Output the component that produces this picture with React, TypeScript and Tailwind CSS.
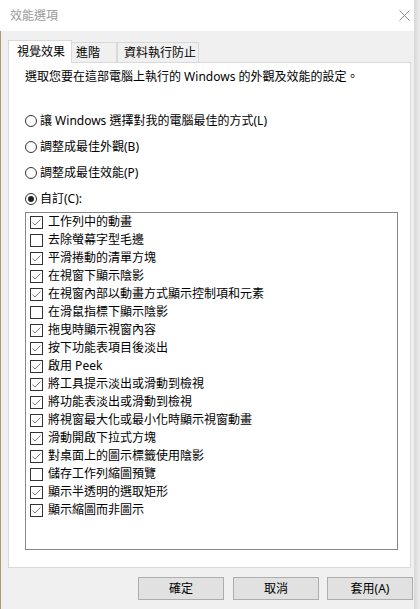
import React from "react";

const items: [string, boolean][] = [
  ["工作列中的動畫", true],
  ["去除螢幕字型毛邊", false],
  ["平滑捲動的清單方塊", true],
  ["在視窗下顯示陰影", true],
  ["在視窗內部以動畫方式顯示控制項和元素", true],
  ["在滑鼠指標下顯示陰影", false],
  ["拖曳時顯示視窗內容", true],
  ["按下功能表項目後淡出", true],
  ["啟用 Peek", true],
  ["將工具提示淡出或滑動到檢視", true],
  ["將功能表淡出或滑動到檢視", true],
  ["將視窗最大化或最小化時顯示視窗動畫", true],
  ["滑動開啟下拉式方塊", true],
  ["對桌面上的圖示標籤使用陰影", true],
  ["儲存工作列縮圖預覽", false],
  ["顯示半透明的選取矩形", true],
  ["顯示縮圖而非圖示", true],
];

function Radio({ label, checked }: { label: string; checked?: boolean }) {
  return (
    <div className="flex items-center h-4">
      <div className="w-3 h-3 rounded-full border border-[#333] bg-white flex items-center justify-center">
        {checked && <div className="w-[6px] h-[6px] rounded-full bg-[#222]" />}
      </div>
      <span className="ml-[3px] leading-4">{label}</span>
    </div>
  );
}

function Check({ label, checked }: { label: string; checked: boolean }) {
  return (
    <div className="flex items-center h-[18px]">
      <div className="w-[13px] h-[13px] border border-[#333] bg-white relative">
        {checked && (
          <svg className="absolute left-0 top-0" width="11" height="11" viewBox="0 0 11 11">
            <polyline points="1.5,5.5 4,8 9.5,2.5" fill="none" stroke="#7a7a7a" strokeWidth="1" />
          </svg>
        )}
      </div>
      <span className="ml-[5px] leading-4">{label}</span>
    </div>
  );
}

export default function App() {
  return (
    <div className="w-[420px] h-[609px] flex bg-[#f0f0f0] overflow-hidden text-[12px] text-black font-['Noto_Sans','Noto_Sans_CJK_TC',sans-serif]">
      <div className="w-[1px] h-full flex flex-col">
        <div className="h-[31px] bg-white" />
        <div className="flex-1 bg-[#a89c74]" />
      </div>
      <div className="w-[413px] h-full flex flex-col">
        <div className="h-[31px] bg-white flex items-center justify-between pl-[9px] pr-[4px] shrink-0">
          <span className="text-[#9a9a9a] leading-4">效能選項</span>
          <svg width="11" height="11" viewBox="0 0 11 11">
            <path d="M0.5 0.5 L10.5 10.5 M10.5 0.5 L0.5 10.5" stroke="#8a8a8a" strokeWidth="1" />
          </svg>
        </div>
        <div className="flex-1 bg-[#f0f0f0] flex flex-col pl-[7px]">
          <div className="flex items-end h-[31px] shrink-0 mt-[0px]">
            <div className="w-[64px] h-[23px] bg-white border border-[#d9d9d9] border-b-0 flex items-center pl-[8px] relative z-10 -mb-[1px]">
              <span className="leading-4">視覺效果</span>
            </div>
            <div className="w-[45px] h-[20px] bg-[#f0f0f0] border border-[#d9d9d9] border-b-0 border-l-0 flex items-center pl-[4px]">
              <span className="leading-4">進階</span>
            </div>
            <div className="w-[82px] h-[20px] bg-[#f0f0f0] border border-[#d9d9d9] border-b-0 flex items-center pl-[6px]">
              <span className="leading-4">資料執行防止</span>
            </div>
          </div>
          <div className="w-[403px] h-[506px] bg-white border border-[#d9d9d9] flex flex-col pl-[16px] shrink-0">
            <div className="mt-[6px] leading-4">選取您要在這部電腦上執行的 Windows 的外觀及效能的設定。</div>
            <div className="mt-[28px] flex flex-col gap-[10px]">
              <Radio label="讓 Windows 選擇對我的電腦最佳的方式(L)" />
              <Radio label="調整成最佳外觀(B)" />
              <Radio label="調整成最佳效能(P)" />
              <Radio label="自訂(C):" checked />
            </div>
            <div className="mt-[5px] w-[373px] h-[338px] border border-[#828790] bg-white flex flex-col pl-[4px]">
              {items.map(([l, c]) => (
                <Check key={l} label={l} checked={c} />
              ))}
            </div>
          </div>
          <div className="flex mt-[9px] pl-[130px]">
            <button className="w-[86px] h-[23px] bg-[#e1e1e1] border border-[#adadad] leading-4">確定</button>
            <button className="ml-[9px] w-[86px] h-[23px] bg-[#e1e1e1] border border-[#adadad] leading-4">取消</button>
            <button className="ml-[8px] w-[86px] h-[23px] bg-[#e1e1e1] border border-[#adadad] leading-4">套用(A)</button>
          </div>
        </div>
      </div>
      <div className="w-[6px] h-full bg-gradient-to-r from-[#d8d8d8] to-[#ececec]" />
    </div>
  );
}
